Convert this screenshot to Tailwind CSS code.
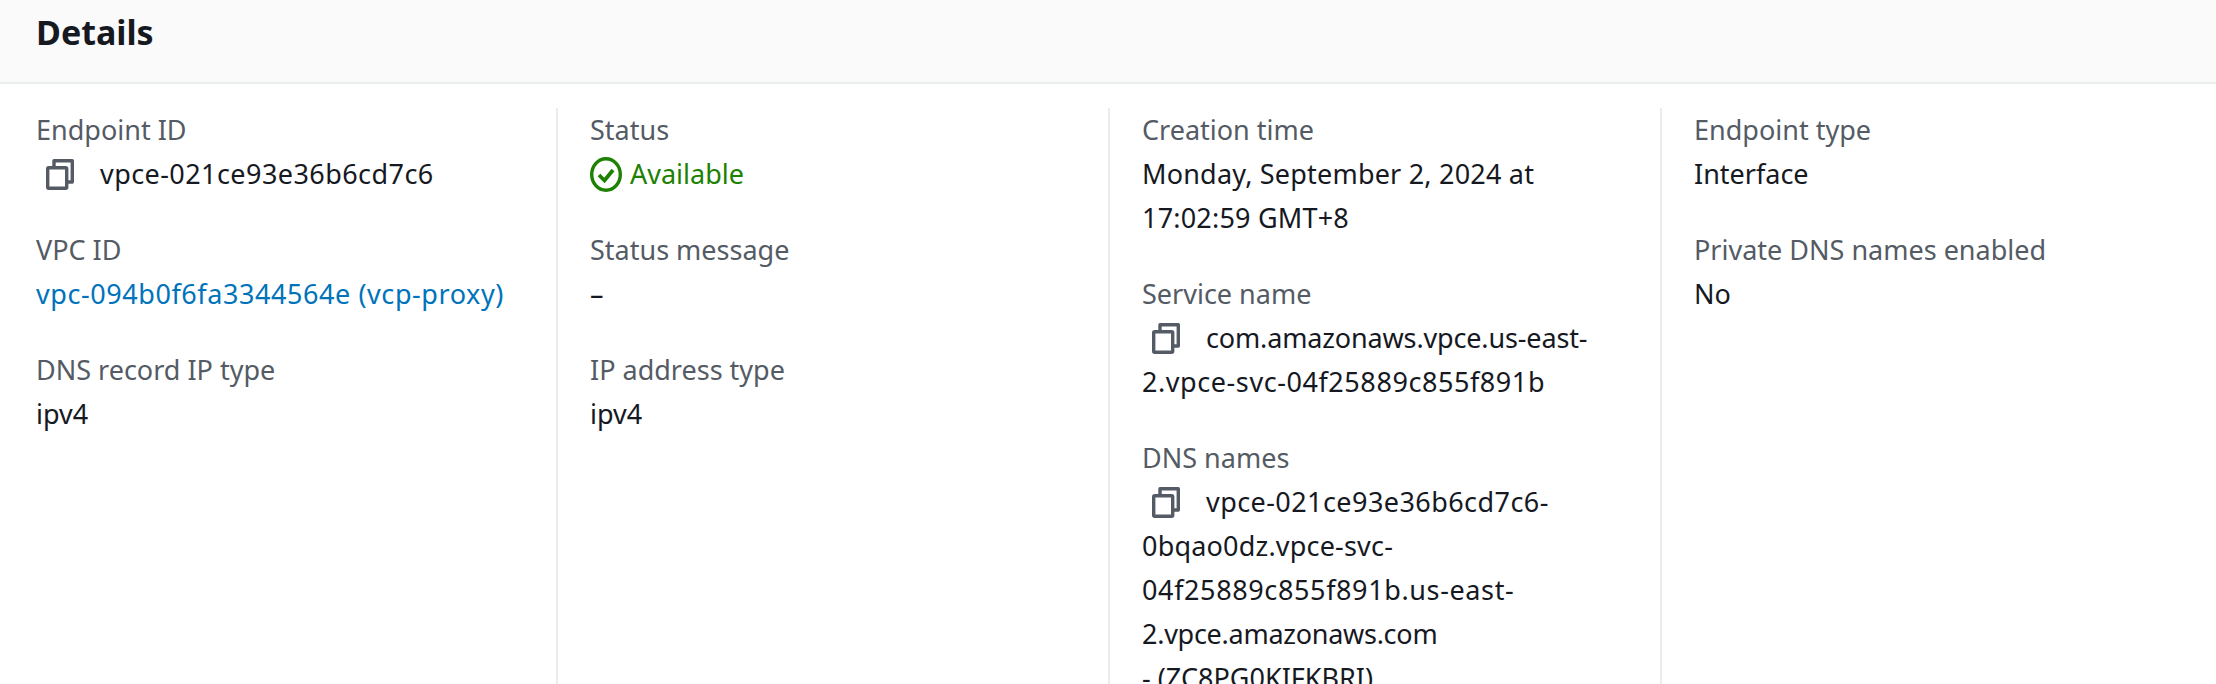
<!DOCTYPE html>
<html>
<head>
<meta charset="utf-8">
<script src="https://cdn.jsdelivr.net/npm/@tailwindcss/browser@4"></script>
</head>
<body class="bg-white">
<div class="h-[684px] w-[2216px] overflow-hidden font-['Noto_Sans',sans-serif] text-[27px] leading-[44px] text-[#16191f]">
  <header class="h-[84px] border-b-2 border-[#eaeded] bg-[#fafafa] pl-[36px]">
    <h2 class="pt-[10px] text-[34px] leading-[44px] font-bold">Details</h2>
  </header>
  <div class="grid grid-cols-[558px_552px_552px_1fr] pt-[24px]">
    <div class="flex h-[700px] flex-col gap-[32px] border-r-2 border-[#eaeded] pl-[36px]">
      <div>
        <div class="text-[#545b64]">Endpoint ID</div>
        <div class="flex items-center tracking-[0.43px]"><svg class="ml-[10px] mr-[26px] h-[31px] w-[28px]" viewBox="0 0 28 31" preserveAspectRatio="none" fill="none" stroke="#545b64" stroke-width="3.4" stroke-linejoin="round"><rect x="1.7" y="8.7" width="19" height="20.6" rx="1"/><path d="M8 8V1.7h18.3V23H21"/></svg>vpce-021ce93e36b6cd7c6</div>
      </div>
      <div>
        <div class="text-[#545b64]">VPC ID</div>
        <div class="tracking-[0.57px] text-[#0073bb]">vpc-094b0f6fa3344564e (vcp-proxy)</div>
      </div>
      <div>
        <div class="text-[#545b64]">DNS record IP type</div>
        <div>ipv4</div>
      </div>
    </div>
    <div class="flex h-[700px] flex-col gap-[32px] border-r-2 border-[#eaeded] pl-[32px]">
      <div>
        <div class="text-[#545b64]">Status</div>
        <div class="flex items-center gap-[8px] text-[#1d8102]"><svg class="h-[35px] w-[32px]" viewBox="0 0 32 35" preserveAspectRatio="none" fill="none" stroke="#1d8102" stroke-width="3.4"><ellipse cx="16" cy="17.5" rx="14.3" ry="15.8"/><path d="M9 18l5.5 5.5 8.5-10.5" stroke-width="3.8"/></svg>Available</div>
      </div>
      <div>
        <div class="text-[#545b64]">Status message</div>
        <div>–</div>
      </div>
      <div>
        <div class="text-[#545b64]">IP address type</div>
        <div>ipv4</div>
      </div>
    </div>
    <div class="flex h-[700px] flex-col gap-[32px] border-r-2 border-[#eaeded] pl-[32px]">
      <div>
        <div class="text-[#545b64]">Creation time</div>
        <div class="tracking-[0.2px]">Monday, September 2, 2024 at<br>17:02:59 GMT+8</div>
      </div>
      <div>
        <div class="text-[#545b64]">Service name</div>
        <div><svg class="mt-[-4px] ml-[10px] mr-[26px] inline-block h-[31px] w-[28px] align-middle" viewBox="0 0 28 31" preserveAspectRatio="none" fill="none" stroke="#545b64" stroke-width="3.4" stroke-linejoin="round"><rect x="1.7" y="8.7" width="19" height="20.6" rx="1"/><path d="M8 8V1.7h18.3V23H21"/></svg><span class="tracking-[-0.15px]">com.amazonaws.vpce.us-east-</span><br><span class="tracking-[0.57px]">2.vpce-svc-04f25889c855f891b</span></div>
      </div>
      <div>
        <div class="text-[#545b64]">DNS names</div>
        <div><svg class="mt-[-4px] ml-[10px] mr-[26px] inline-block h-[31px] w-[28px] align-middle" viewBox="0 0 28 31" preserveAspectRatio="none" fill="none" stroke="#545b64" stroke-width="3.4" stroke-linejoin="round"><rect x="1.7" y="8.7" width="19" height="20.6" rx="1"/><path d="M8 8V1.7h18.3V23H21"/></svg><span class="tracking-[0.43px]">vpce-021ce93e36b6cd7c6-</span><br><span class="tracking-[0.19px]">0bqao0dz.vpce-svc-</span><br><span class="tracking-[0.62px]">04f25889c855f891b.us-east-</span><br><span class="tracking-[-0.27px]">2.vpce.amazonaws.com</span><br>- (ZC8PG0KIFKBRI)</div>
      </div>
    </div>
    <div class="flex flex-col gap-[32px] pl-[32px]">
      <div>
        <div class="text-[#545b64]">Endpoint type</div>
        <div>Interface</div>
      </div>
      <div>
        <div class="text-[#545b64]">Private DNS names enabled</div>
        <div>No</div>
      </div>
    </div>
  </div>
</div>
</body>
</html>
